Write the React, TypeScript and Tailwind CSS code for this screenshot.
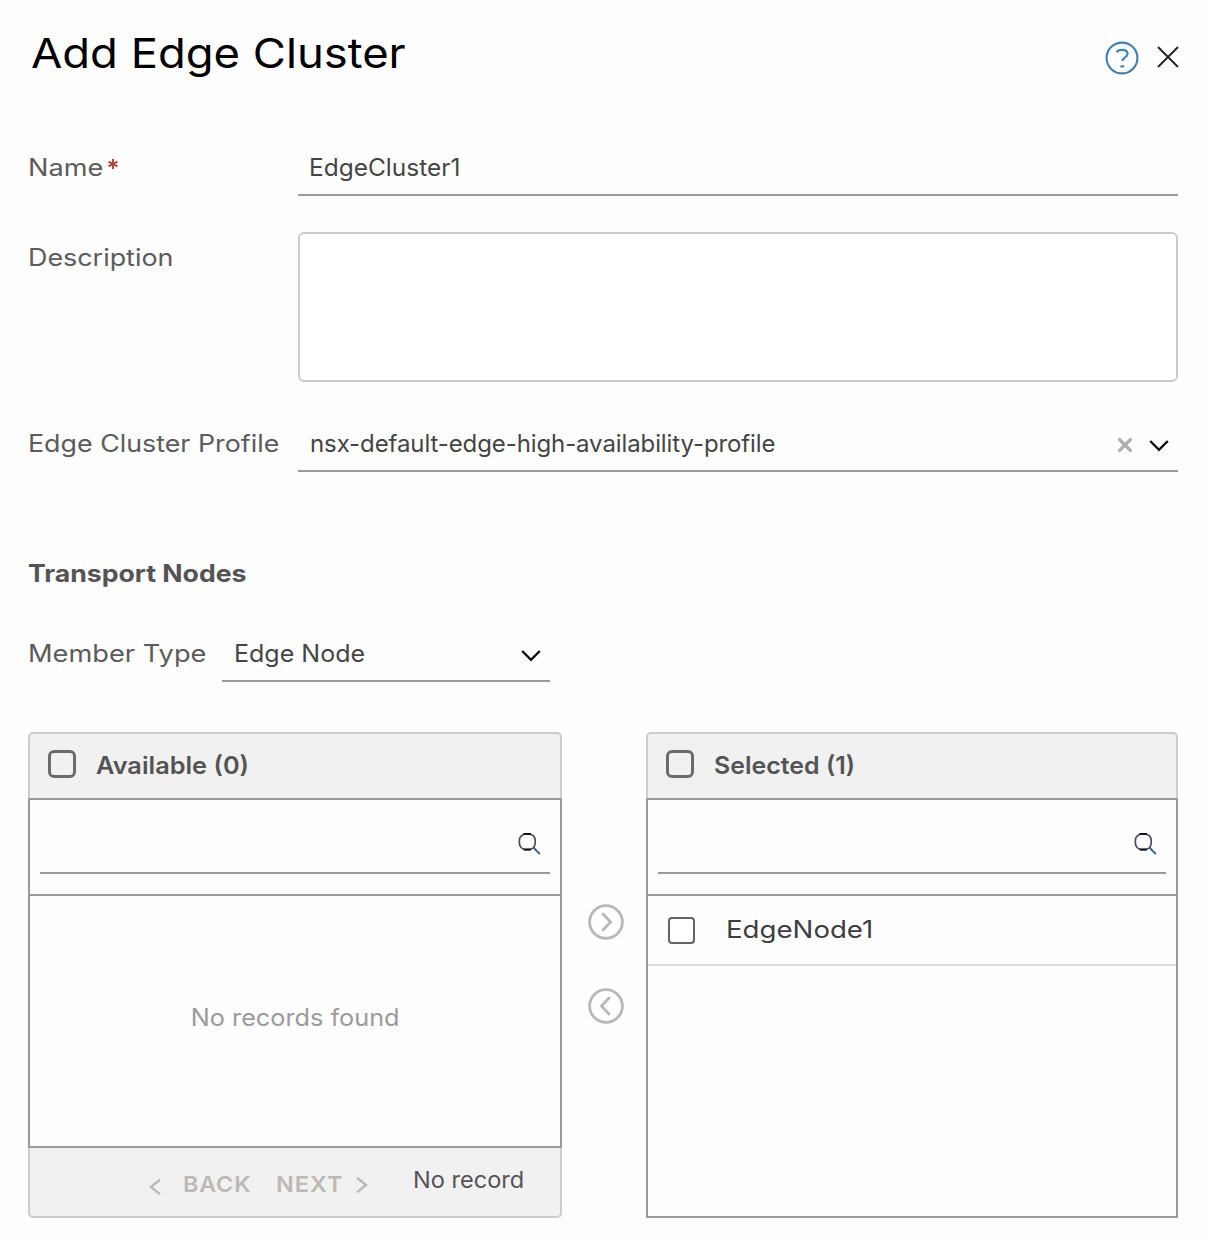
import type { ReactNode } from "react";

function ChevronDown({ className = "" }: { className?: string }) {
  return (
    <svg className={className} width="20" height="12" viewBox="0 0 20 12" fill="none" stroke="#0b0b12" strokeWidth="2.4">
      <path d="M1.2 1 10 9.8 18.8 1" />
    </svg>
  );
}

function SearchIcon() {
  return (
    <svg width="24" height="24" viewBox="0 0 24 24" fill="none">
      <rect x="2.4" y="2" width="15.8" height="15.6" rx="6.4" stroke="#4b4658" strokeWidth="1.6" />
      <path d="M6.5 2h7.4M6.5 17.5h7.4" stroke="#15131c" strokeWidth="2" />
      <path d="m16.6 15.8 6.2 6.2" stroke="#3f6488" strokeWidth="2" />
    </svg>
  );
}

function PagerChevron({ d }: { d: string }) {
  return (
    <svg className="shrink-0" width="12" height="18" viewBox="0 0 12 18" fill="none" stroke="#bdb9b6" strokeWidth="2.4">
      <path d={d} />
    </svg>
  );
}

function MoveButton({ label, d }: { label: string; d: string }) {
  return (
    <button aria-label={label} className="block h-9 w-9">
      <svg width="36" height="36" viewBox="0 0 36 36" fill="none" stroke="#b8b8b8" strokeWidth="2.8">
        <circle cx="18" cy="18" r="16.4" />
        <path d={d} strokeLinecap="round" strokeWidth="2.7" />
      </svg>
    </button>
  );
}

function PanelHeader({ children }: { children: ReactNode }) {
  return (
    <div className="flex h-[66px] items-center rounded-t-[5px] border-2 border-b-0 border-[#cdcdcd] bg-[#f1f1f1] pl-[18px] text-[24px] font-semibold text-[#545454]">
      <span className="mb-1 h-7 w-7 shrink-0 rounded-[6px] border-[3px] border-[#6b6b6b]" />
      {children}
    </div>
  );
}

function PanelSearch() {
  return (
    <div className="h-[96px] border-b-2 border-[#9a9a9a] px-[10px]">
      <div className="flex h-[74px] items-center justify-end border-b-2 border-[#9a9a9a] pt-[15px] pr-[9px]">
        <SearchIcon />
      </div>
    </div>
  );
}

export default function App() {
  return (
    <div className="h-[1244px] w-[1208px] overflow-hidden bg-[#fefefe] pt-[22px] pr-[30px] pl-[28px] font-[Inter,sans-serif] text-[24px] text-[#5c5c5c]">
      <header className="flex h-[62px] items-center justify-between">
        <h1 className="ml-[3px] origin-left scale-x-[1.107] text-[41px] leading-[62px] text-black">Add Edge Cluster</h1>
        <div className="-mr-px flex items-center gap-[18px]">
          <svg className="mt-[10px]" width="34" height="34" viewBox="0 0 34 34" fill="none" stroke="#3e80b4" strokeWidth="2.1">
            <circle cx="17" cy="17" r="15.4" />
            <path d="M11.6 11.2c1-1.6 2.5-2.3 5.2-2.3 3.8 0 5.8 1.6 5.8 4.2 0 3.2-5.2 3.2-5.2 6.9" />
            <path d="M15.4 25.4h3.8" />
          </svg>
          <svg className="mt-[7px]" width="22" height="22" viewBox="0 0 22 22" fill="none" stroke="#2a2628" strokeWidth="2">
            <path d="m1 1 20 20M21 1 1 21" />
          </svg>
        </div>
      </header>

      <div className="mt-14 flex h-14">
        <label className="flex h-14 w-[270px] items-center">
          <span className="origin-left scale-x-[1.13]">Name</span>
          <svg className="mb-[9px] ml-[13px]" width="10" height="10" viewBox="0 0 10 10" stroke="#b8453c" strokeWidth="2">
            <path d="M5 0v10M.5 2.6l9 4.8M9.5 2.6l-9 4.8" />
          </svg>
        </label>
        <div className="flex flex-1 items-center border-b-2 border-[#9a9a9a] pt-[2px] pl-[11px] text-[#454545]">
          <span className="origin-left scale-x-[1.02]">EdgeCluster1</span>
        </div>
      </div>

      <div className="mt-9 flex h-[150px]">
        <label className="h-[52px] w-[270px] leading-[52px]">
          <span className="inline-block origin-left scale-x-[1.12]">Description</span>
        </label>
        <div className="flex-1 rounded-[6px] border-2 border-[#cbcbcb] bg-white" />
      </div>

      <div className="mt-[34px] flex h-14">
        <label className="h-14 w-[270px] leading-[56px] whitespace-nowrap">
          <span className="inline-block origin-left scale-x-[1.117]">Edge Cluster Profile</span>
        </label>
        <div className="flex flex-1 items-center border-b-2 border-[#9a9a9a] pr-[9px] pl-[12px] text-[#454545]">
          <span className="flex-1 pt-[2px] tracking-[-0.1px]">nsx-default-edge-high-availability-profile</span>
          <svg className="mt-[3px] mr-[16px]" width="16" height="16" viewBox="0 0 16 16" stroke="#aeaeae" strokeWidth="3.4" strokeLinecap="round">
            <path d="m2.6 2.6 10.8 10.8M13.4 2.6 2.6 13.4" />
          </svg>
          <ChevronDown className="mt-[6px]" />
        </div>
      </div>

      <h2 className="mt-[81px] h-10 leading-[42px] font-bold text-[#545454]">
        <span className="inline-block origin-left scale-x-[1.11]">Transport Nodes</span>
      </h2>

      <div className="mt-[33px] flex h-14">
        <label className="h-14 w-[194px] leading-[56px] whitespace-nowrap">
          <span className="inline-block origin-left scale-x-[1.134]">Member Type</span>
        </label>
        <div className="flex w-[328px] items-center justify-between border-b-2 border-[#9a9a9a] pr-[9px] pl-[12px] text-[#454545]">
          <span className="origin-left scale-x-[1.042] pt-[2px]">Edge Node</span>
          <ChevronDown className="mt-[6px]" />
        </div>
      </div>

      <div className="mt-[50px] flex h-[486px]">
        <section className="flex w-[534px] flex-col">
          <PanelHeader>
            <span className="ml-[20px] origin-left scale-x-[1.055]">Available (0)</span>
          </PanelHeader>
          <div className="flex h-[350px] flex-col border-2 border-[#9a9a9a]">
            <PanelSearch />
            <div className="flex flex-1 items-center justify-center pb-[6px] text-[#9b9b9b]">
              <span className="scale-x-[1.053]">No records found</span>
            </div>
          </div>
          <footer className="flex h-[70px] items-center rounded-b-[5px] border-2 border-t-0 border-[#cdcdcd] bg-[#f1f1f1] pl-[119px] text-[22px] font-semibold text-[#bdb9b6]">
            <span className="mt-[9px] flex">
              <PagerChevron d="M11 1.8 2 9l9 7.2" />
            </span>
            <span className="mt-[5px] ml-[22px] origin-left scale-x-[1.06] tracking-[0.8px]">BACK</span>
            <span className="mt-[5px] ml-[28px] origin-left scale-x-[1.065] tracking-[1px]">NEXT</span>
            <span className="mt-[5px] ml-[17px] flex">
              <PagerChevron d="M1 1.8 10 9l-9 7.2" />
            </span>
            <span className="mb-[4px] ml-[45px] origin-left scale-x-[1.024] text-[23px] font-normal text-[#545454]">No record</span>
          </footer>
        </section>

        <div className="flex w-[84px] flex-col items-center gap-12 pt-[172px] pl-1">
          <MoveButton label="Add to selected" d="m15 10 7.6 8-7.6 8" />
          <MoveButton label="Remove from selected" d="m21 10-7.6 8 7.6 8" />
        </div>

        <section className="flex w-[532px] flex-col">
          <PanelHeader>
            <span className="ml-[20px] origin-left scale-x-[1.039]">Selected (1)</span>
          </PanelHeader>
          <div className="flex-1 border-2 border-[#9a9a9a]">
            <PanelSearch />
            <div className="flex h-[70px] items-center border-b-2 border-[#dedede] pl-5 text-[#3e3e44]">
              <span className="h-[27px] w-[27px] rounded-[4px] border-2 border-[#65606e] bg-white" />
              <span className="ml-[31px] origin-left scale-x-[1.151]">EdgeNode1</span>
            </div>
          </div>
        </section>
      </div>
    </div>
  );
}
